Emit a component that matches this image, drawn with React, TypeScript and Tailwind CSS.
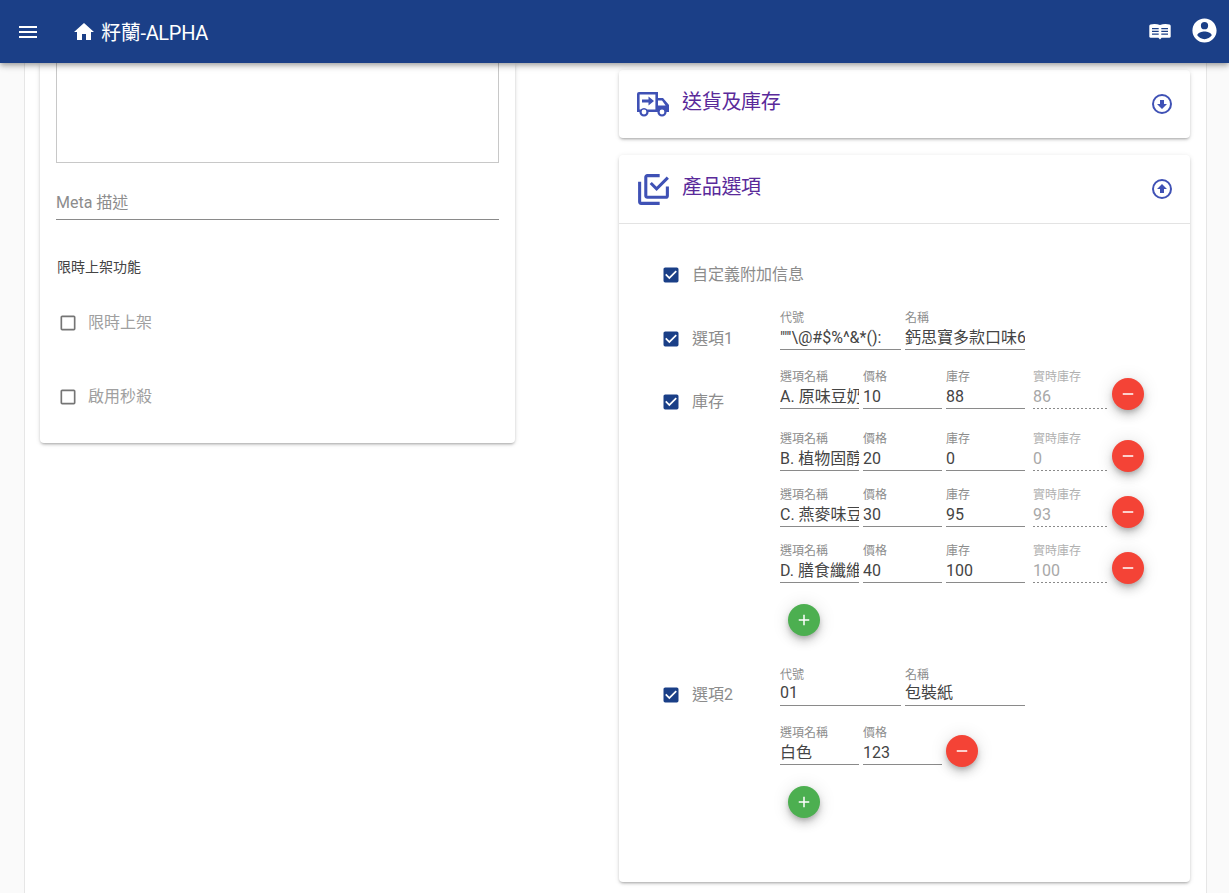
const FONT = 'font-["Roboto","Noto_Sans_CJK_TC",sans-serif]';

function Icon({ d, className }: { d: string; className?: string }) {
  return (
    <svg viewBox="0 0 24 24" fill="currentColor" className={className}>
      <path d={d} />
    </svg>
  );
}

const MENU = 'M3,6H21V8H3V6M3,11H21V13H3V11M3,16H21V18H3V16Z';
const HOME = 'M10,20V14H14V20H19V12H22L12,3L2,12H5V20H10Z';
const ACCOUNT =
  'M12,19.2C9.5,19.2 7.29,17.92 6,16C6.03,14 10,12.9 12,12.9C14,12.9 17.97,14 18,16C16.71,17.92 14.5,19.2 12,19.2M12,5A3,3 0 0,1 15,8A3,3 0 0,1 12,11A3,3 0 0,1 9,8A3,3 0 0,1 12,5M12,2A10,10 0 0,0 2,12A10,10 0 0,0 12,22A10,10 0 0,0 22,12C22,6.47 17.5,2 12,2Z';
const CHECKED =
  'M10,17L5,12L6.41,10.58L10,14.17L17.59,6.58L19,8M19,3H5C3.89,3 3,3.89 3,5V19A2,2 0 0,0 5,21H19A2,2 0 0,0 21,19V5C21,3.89 20.1,3 19,3Z';
const BLANK =
  'M19,3H5C3.89,3 3,3.89 3,5V19A2,2 0 0,0 5,21H19A2,2 0 0,0 21,19V5C21,3.89 20.1,3 19,3M19,5V19H5V5H19Z';
const MULTI =
  'M20,16V10H22V16A2,2 0 0,1 20,18H8C6.89,18 6,17.1 6,16V4C6,2.89 6.89,2 8,2H16V4H8V16H20M10.91,7.08L14,10.17L20.59,3.58L22,5L14,13L9.5,8.5L10.91,7.08M16,20V22H4A2,2 0 0,1 2,20V7H4V20H16Z';
const DOWN =
  'M12,22A10,10 0 0,1 2,12A10,10 0 0,1 12,2A10,10 0 0,1 22,12A10,10 0 0,1 12,22M12,4A8,8 0 0,0 4,12A8,8 0 0,0 12,20A8,8 0 0,0 20,12A8,8 0 0,0 12,4M12,17L7,12H10V8H14V12H17L12,17Z';
const UP =
  'M12,7L17,12H14V16H10V12H7L12,7M12,22A10,10 0 0,1 2,12A10,10 0 0,1 12,2A10,10 0 0,1 22,12A10,10 0 0,1 12,22M12,20A8,8 0 0,0 20,12A8,8 0 0,0 12,4A8,8 0 0,0 4,12A8,8 0 0,0 12,20Z';

function BookIcon({ className }: { className?: string }) {
  return (
    <svg viewBox="0 0 22 18" className={className}>
      <path
        fill="currentColor"
        fillRule="evenodd"
        d="M1.5,1.5 C4,0.6 8,0.6 11,2 C14,0.6 18,0.6 20.5,1.5 C21.3,1.7 21.7,2.2 21.7,3 V13.5 C21.7,14.2 21.3,14.7 20.5,14.7 H12.6 L11,16.6 L9.4,14.7 H1.5 C0.7,14.7 0.3,14.2 0.3,13.5 V3 C0.3,2.2 0.7,1.7 1.5,1.5 Z M3,5 V6.2 H9.7 V5 Z M12.3,5 V6.2 H19 V5 Z M3,7.8 V9 H9.7 V7.8 Z M12.3,7.8 V9 H19 V7.8 Z M3,10.6 V11.8 H9.7 V10.6 Z M12.3,10.6 V11.8 H19 V10.6 Z"
      />
    </svg>
  );
}

function TruckIcon({ className }: { className?: string }) {
  return (
    <svg viewBox="0 0 34 26" className={className}>
      <path
        fill="currentColor"
        fillRule="evenodd"
        d="M3,1 H22 V7 H27 L33,14 V21 H30.6 A4.6,4.6 0 0 1 21.4,21 H12.6 A4.6,4.6 0 0 1 3.4,21 H1 V3 A2,2 0 0 1 3,1 Z M3.6,3.6 V18.4 H4.6 A4.6,4.6 0 0 1 11.4,18.4 H19.4 V3.6 Z M22,9.6 V14.4 H29.6 L26,9.6 Z M8,18.6 A2.4,2.4 0 1 0 8,23.4 A2.4,2.4 0 1 0 8,18.6 Z M26,18.6 A2.4,2.4 0 1 0 26,23.4 A2.4,2.4 0 1 0 26,18.6 Z"
      />
      <path fill="currentColor" d="M12.5,5.5 L18,10 L12.5,14.5 V11.5 H6 V8.5 H12.5 Z" />
    </svg>
  );
}

function Field({
  label,
  value,
  width,
  disabled,
  tight,
}: {
  label: string;
  value: string;
  width: string;
  disabled?: boolean;
  tight?: boolean;
}) {
  return (
    <div className={`${width} shrink-0`}>
      <div
        className={`text-[12px] whitespace-nowrap ${tight ? 'leading-[14px]' : 'leading-[15px]'} ${
          disabled ? 'text-[#b0b0b0]' : 'text-[#8c8c8c]'
        }`}
      >
        {label}
      </div>
      <div
        className={`h-[23px] text-[16px] whitespace-nowrap overflow-hidden ${tight ? 'leading-[22px]' : 'leading-[24px]'} ${
          disabled ? 'text-[#a8a8a8]' : 'text-[#444444]'
        }`}
      >
        {value}
      </div>
      {disabled ? (
        <div className="h-px bg-[repeating-linear-gradient(90deg,#8a8a8a_0px,#8a8a8a_2px,transparent_2px,transparent_4px)]" />
      ) : (
        <div className="h-px bg-[#8a8a8a]" />
      )}
    </div>
  );
}

function Fab({ kind }: { kind: 'add' | 'remove' }) {
  const bg = kind === 'add' ? 'bg-[#4caf50]' : 'bg-[#f44336]';
  return (
    <button
      className={`${bg} w-8 h-8 rounded-full flex items-center justify-center text-white shrink-0 shadow-[0_3px_5px_-1px_rgba(0,0,0,0.2),0_6px_10px_0_rgba(0,0,0,0.14),0_1px_18px_0_rgba(0,0,0,0.12)]`}
    >
      <svg viewBox="0 0 24 24" fill="currentColor" className="w-[18px] h-[18px]">
        {kind === 'add' ? <path d="M19,13H13V19H11V13H5V11H11V5H13V11H19V13Z" /> : <path d="M19,13H5V11H19V13Z" />}
      </svg>
    </button>
  );
}

function OptionLabel({ label }: { label: string }) {
  return (
    <div className="flex items-center w-[119px] shrink-0">
      <Icon d={CHECKED} className="w-5 h-5 shrink-0 text-[#1a3f87]" />
      <span className="ml-[11px] text-[16px] leading-5 text-[#8c8c8c] whitespace-nowrap">{label}</span>
    </div>
  );
}

const stock = [
  { name: 'A. 原味豆奶粉', price: '10', qty: '88', live: '86', top: 'mt-0' },
  { name: 'B. 植物固醇豆奶', price: '20', qty: '0', live: '0', top: 'mt-[22px]' },
  { name: 'C. 燕麥味豆奶粉', price: '30', qty: '95', live: '93', top: 'mt-[16px]' },
  { name: 'D. 膳食纖維豆奶', price: '40', qty: '100', live: '100', top: 'mt-[16px]' },
];

function PanelHeader({
  icon,
  title,
  arrow,
  divider,
  height,
}: {
  icon: React.ReactNode;
  title: string;
  arrow: string;
  divider?: boolean;
  height: string;
}) {
  return (
    <div className={`${height} flex items-center pl-[17px] pr-[16px] ${divider ? 'border-b border-[#e3e3e3]' : ''}`}>
      <div className="w-[34px] flex justify-center text-[#3f51b5]">{icon}</div>
      <div className="ml-[12px] -mt-[4px] text-[20px] tracking-[-0.3px] text-[#5a2a9a]">{title}</div>
      <Icon d={arrow} className="ml-auto w-6 h-6 text-[#3f51b5]" />
    </div>
  );
}

export default function App() {
  return (
    <div className={`h-[893px] overflow-hidden bg-[#fafafa] ${FONT}`}>
      {/* top bar */}
      <header className="relative z-10 h-[63px] bg-[#1b3f87] flex items-center text-white shadow-[0_2px_4px_-1px_rgba(0,0,0,0.2),0_4px_5px_0_rgba(0,0,0,0.14),0_1px_10px_0_rgba(0,0,0,0.12)]">
        <Icon d={MENU} className="ml-[16px] w-6 h-6" />
        <Icon d={HOME} className="ml-[32px] w-6 h-6" />
        <span className="ml-[5px] mt-[2px] text-[20px] tracking-[-0.3px]">籽蘭-ALPHA</span>
        <BookIcon className="ml-auto w-[22px] h-[18px]" />
        <Icon d={ACCOUNT} className="ml-[19px] mr-[10px] -mt-[3px] w-[29px] h-[29px]" />
      </header>

      <main className="ml-[24px] w-[1183px] h-[830px] bg-white border-x border-[#e6e6e6] flex items-start">
        {/* left card */}
        <section className="ml-[15px] w-[475px] h-[380px] bg-white rounded-b shadow-[0_2px_3px_-1px_rgba(0,0,0,0.3),0_1px_5px_0_rgba(0,0,0,0.12)] px-[16px]">
          <div className="h-[100px] border-x border-b border-[#c8c8c8]" />
          <div className="mt-[28px] h-[29px] border-b border-[#8a8a8a] text-[16px] leading-[24px] text-[#8c8c8c]">Meta 描述</div>
          <div className="mt-[38px] ml-px text-[14px] leading-[18px] text-[#444444]">限時上架功能</div>
          <div className="mt-[37px] ml-[2px] flex items-center">
            <Icon d={BLANK} className="w-5 h-5 text-[#757575]" />
            <span className="ml-[10px] text-[16px] leading-5 text-[#a0a0a0]">限時上架</span>
          </div>
          <div className="mt-[54px] ml-[2px] flex items-center">
            <Icon d={BLANK} className="w-5 h-5 text-[#757575]" />
            <span className="ml-[10px] text-[16px] leading-5 text-[#a0a0a0]">啟用秒殺</span>
          </div>
        </section>

        {/* right column */}
        <div className="ml-[104px] w-[571px] pt-[7px]">
          <section className="bg-white rounded shadow-[0_2px_3px_-1px_rgba(0,0,0,0.3),0_1px_5px_0_rgba(0,0,0,0.12)]">
            <PanelHeader
              height="h-[68px]"
              icon={<TruckIcon className="w-[34px] h-[26px]" />}
              title="送貨及庫存"
              arrow={DOWN}
            />
          </section>

          <section className="mt-[17px] h-[727px] bg-white rounded shadow-[0_2px_3px_-1px_rgba(0,0,0,0.3),0_1px_5px_0_rgba(0,0,0,0.12)]">
            <PanelHeader
              height="h-[69px]"
              divider
              icon={<Icon d={MULTI} className="w-[37px] h-[37px] shrink-0" />}
              title="產品選項"
              arrow={UP}
            />

            <div className="pl-[42px]">
              <div className="pt-[41px]">
                <OptionLabel label="自定義附加信息" />
              </div>

              <div className="mt-[26px] flex items-start">
                <div className="pt-[18px]">
                  <OptionLabel label="選項1" />
                </div>
                <div className="flex gap-1">
                  <Field label="代號" value={'""\'\\@#$%^&*():'} width="w-[121px]" />
                  <Field label="名稱" value="鈣思寶多款口味6罐裝" width="w-[120px]" />
                </div>
              </div>

              <div className="mt-[20px] flex items-start">
                <div className="pt-[22px]">
                  <OptionLabel label="庫存" />
                </div>
                <div>
                  {stock.map((row) => (
                    <div key={row.name} className={`${row.top} flex gap-1 items-start`}>
                      <Field label="選項名稱" value={row.name} width="w-[79px]" />
                      <Field label="價格" value={row.price} width="w-[79px]" />
                      <Field label="庫存" value={row.qty} width="w-[79px]" />
                      <div className="ml-1">
                        <Field label="實時庫存" value={row.live} width="w-[75px]" disabled />
                      </div>
                      <div className="mt-[8px]">
                        <Fab kind="remove" />
                      </div>
                    </div>
                  ))}
                  <div className="mt-[20px] ml-[8px]">
                    <Fab kind="add" />
                  </div>
                </div>
              </div>

              <div className="mt-[32px] flex items-start">
                <div className="pt-[17px]">
                  <OptionLabel label="選項2" />
                </div>
                <div>
                  <div className="flex gap-1">
                    <Field tight label="代號" value="01" width="w-[121px]" />
                    <Field tight label="名稱" value="包裝紙" width="w-[120px]" />
                  </div>
                  <div className="mt-[20px] flex gap-1 items-start">
                    <Field label="選項名稱" value="白色" width="w-[79px]" />
                    <Field label="價格" value="123" width="w-[79px]" />
                    <div className="mt-[9px]">
                      <Fab kind="remove" />
                    </div>
                  </div>
                  <div className="mt-[19px] ml-[8px]">
                    <Fab kind="add" />
                  </div>
                </div>
              </div>
            </div>
          </section>
        </div>
      </main>
    </div>
  );
}
